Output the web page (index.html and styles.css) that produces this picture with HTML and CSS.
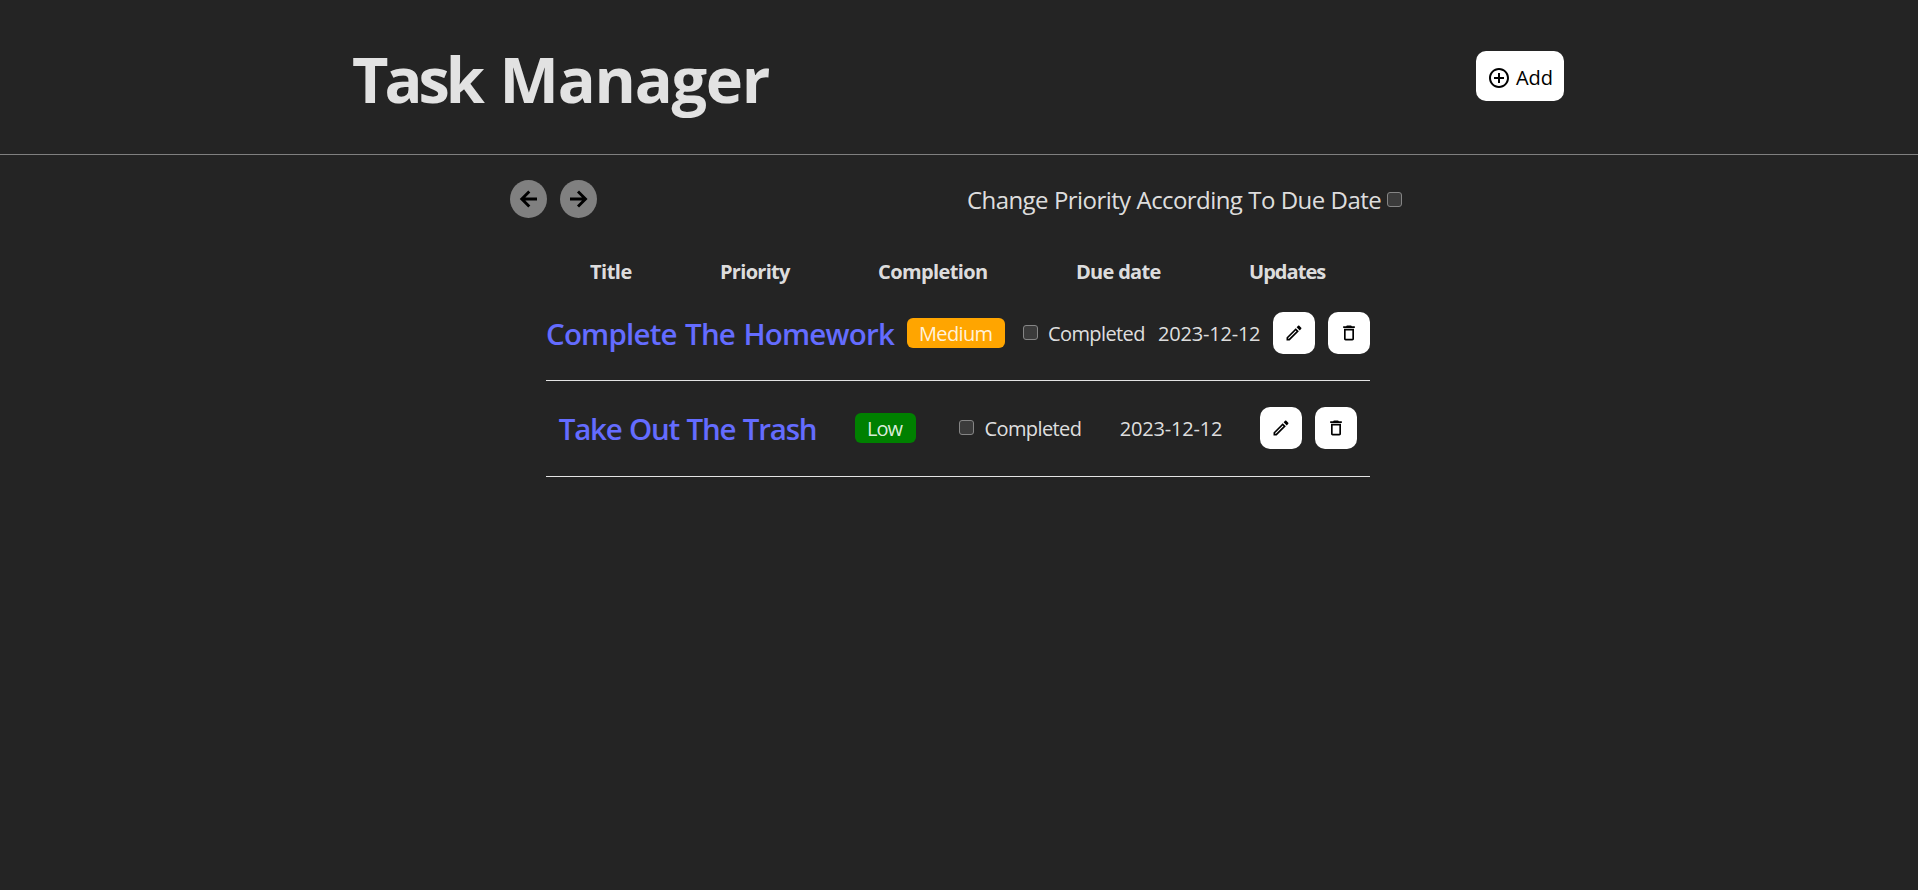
FILE: index.html
```
<!DOCTYPE html>
<html lang="en">
<head>
<meta charset="utf-8">
<title>Task Manager</title>
<link rel="stylesheet" href="styles.css">
</head>
<body>
<header class="header">
  <h1 class="brand"><span class="brand-lead">Task</span> Manager</h1>
  <button class="btn btn-add">
    <svg width="24" height="24" viewBox="0 0 24 24"><path d="M13 7h-2v4H7v2h4v4h2v-4h4v-2h-4V7zm-1-5C6.480 2 2 6.480 2 12s4.480 10 10 10 10-4.480 10-10S17.520 2 12 2zm0 18c-4.410 0-8-3.590-8-8s3.590-8 8-8 8 3.590 8 8-3.590 8-8 8z"/></svg>
    <span>Add</span>
  </button>
</header>
<main class="main">
  <div class="toolbar">
    <div class="arrows">
      <button class="arrow"><svg width="20" height="20" viewBox="0 0 20 20"><path d="M18 10H2.500M10.300 2.500L2.800 10l7.500 7.500"/></svg></button>
      <button class="arrow"><svg width="20" height="20" viewBox="0 0 20 20"><path d="M1 10h15.500M9 2.500l7.500 7.500L9 17.500"/></svg></button>
    </div>
    <label class="auto"><span class="auto-text">Change Priority According To Due Date</span><input type="checkbox" class="check"></label>
  </div>
  <section class="list">
    <div class="head">
      <span class="h-title">Title</span>
      <span class="h-priority">Priority</span>
      <span class="h-completion">Completion</span>
      <span class="h-due">Due date</span>
      <span class="h-updates">Updates</span>
    </div>
    <article class="row">
      <a class="title title-long">Complete The Homework</a>
      <span class="badge medium">Medium</span>
      <label class="done"><input type="checkbox" class="check">Completed</label>
      <time class="date">2023-12-12</time>
      <div class="actions">
        <button class="btn btn-icon"><svg width="20" height="20" viewBox="0 0 24 24"><path d="M14.060 9.020l.92.920L5.920 19H5v-.92l9.060-9.060M17.660 3c-.25 0-.51.100-.7.290l-1.830 1.830 3.750 3.750 1.830-1.830c.39-.39.390-1.020 0-1.410l-2.340-2.340c-.2-.2-.45-.29-.71-.29zm-3.600 3.190L3 17.250V21h3.750L17.810 9.940l-3.750-3.750z"/></svg></button>
        <button class="btn btn-icon"><svg width="20" height="20" viewBox="0 0 24 24"><path d="M6 19c0 1.100.9 2 2 2h8c1.100 0 2-.9 2-2V7H6v12zM8 9h8v10H8V9zm7.500-5l-1-1h-5l-1 1H5v2h14V4z"/></svg></button>
      </div>
    </article>
    <article class="row">
      <a class="title title-short">Take Out The Trash</a>
      <span class="badge low">Low</span>
      <label class="done"><input type="checkbox" class="check">Completed</label>
      <time class="date">2023-12-12</time>
      <div class="actions">
        <button class="btn btn-icon"><svg width="20" height="20" viewBox="0 0 24 24"><path d="M14.060 9.020l.92.920L5.920 19H5v-.92l9.060-9.060M17.660 3c-.25 0-.51.100-.7.290l-1.830 1.830 3.750 3.750 1.830-1.830c.39-.39.390-1.020 0-1.410l-2.340-2.340c-.2-.2-.45-.29-.71-.29zm-3.600 3.190L3 17.250V21h3.750L17.810 9.940l-3.750-3.750z"/></svg></button>
        <button class="btn btn-icon"><svg width="20" height="20" viewBox="0 0 24 24"><path d="M6 19c0 1.100.9 2 2 2h8c1.100 0 2-.9 2-2V7H6v12zM8 9h8v10H8V9zm7.500-5l-1-1h-5l-1 1H5v2h14V4z"/></svg></button>
      </div>
    </article>
  </section>
</main>
</body>
</html>
```
FILE: styles.css
```
* { box-sizing: border-box; }

body {
  margin: 0;
  min-height: 100vh;
  background: #242424;
  color: rgba(255, 255, 255, 0.87);
  font-family: "Open Sans", "Noto Sans", sans-serif;
  font-size: 20px;
  font-weight: 420;
  white-space: nowrap;
}

.header {
  display: flex;
  align-items: center;
  justify-content: space-between;
  height: 155px;
  padding: 0 354px 2px 352px;
  border-bottom: 1px solid #808080;
}

.brand {
  margin: 5px 0 0;
  font-size: 63px;
  line-height: 76px;
  font-weight: 730;
  letter-spacing: -1.25px;
  word-spacing: 3.5px;
}

.brand-lead {
  letter-spacing: -4px;
}

.btn {
  display: flex;
  align-items: center;
  justify-content: center;
  padding: 0;
  border: 0;
  border-radius: 10px;
  background: #fff;
  color: #000;
  font: inherit;
}

.btn-add {
  gap: 5px;
  width: 88px;
  height: 50px;
  font-weight: 500;
}

.btn-add span {
  padding-top: 2px;
}

.btn-add svg {
  margin-top: 4px;
}

.btn-icon {
  width: 42px;
  height: 42px;
}

.main {
  padding-top: 25px;
}

.toolbar {
  display: flex;
  align-items: center;
  justify-content: space-between;
  height: 38px;
  margin: 0 516px 0 510px;
}

.arrows {
  display: flex;
  gap: 13px;
}

.arrow {
  display: flex;
  align-items: center;
  justify-content: center;
  width: 37px;
  height: 38px;
  padding: 0;
  border: 0;
  border-radius: 50%;
  background: #808080;
}

.arrow path {
  fill: none;
  stroke: #000;
  stroke-width: 2.9;
}

.auto {
  display: flex;
  align-items: center;
  justify-content: space-between;
  width: 435px;
  font-size: 24px;
  line-height: 38px;
  letter-spacing: -0.57px;
  word-spacing: 0.3px;
}

.auto-text {
  padding-top: 1px;
}

.check {
  appearance: none;
  flex: none;
  width: 15px;
  height: 15px;
  margin: 0;
  border: 1px solid #858585;
  border-radius: 3px;
  background: #3b3b3b;
}

.list {
  width: 824px;
  margin: 39px 0 0 546px;
}

.head {
  display: flex;
  justify-content: space-around;
  height: 27px;
  margin-bottom: 2px;
  font-weight: 700;
  line-height: 29px;
}

.h-title { width: 42px; letter-spacing: -0.5px; }
.h-priority { width: 70px; letter-spacing: -0.7px; }
.h-completion { width: 110px; letter-spacing: -0.6px; }
.h-due { width: 85px; letter-spacing: -0.7px; }
.h-updates { width: 77px; letter-spacing: -0.95px; }

.row {
  display: flex;
  align-items: center;
  justify-content: space-around;
  gap: 13px;
  padding: 26px 0;
  border-bottom: 1px solid #e4e4e4;
}

.row:last-child {
  padding-bottom: 27px;
}

.title {
  color: #646cff;
  font-size: 29.5px;
  font-weight: 570;
  line-height: 43px;
}

.title-long { width: 348px; letter-spacing: -0.8px; word-spacing: 1.5px; }
.title-short { width: 258px; letter-spacing: -1.2px; word-spacing: 1px; }

.row .title { margin: -1px 0; }

.badge {
  height: 30px;
  padding-left: 12px;
  border-radius: 6px;
  line-height: 31px;
  letter-spacing: -0.65px;
}

.medium { width: 98px; background: #ffa500; }
.low { width: 61px; background: #008000; letter-spacing: -1px; }

.done {
  display: flex;
  align-items: center;
  gap: 10px;
  width: 127px;
  padding-left: 5px;
  letter-spacing: -0.6px;
}

.done .check {
  margin-bottom: 2px;
}

.date {
  width: 102px;
  letter-spacing: -0.2px;
}

.actions {
  display: flex;
  gap: 13px;
}
```
